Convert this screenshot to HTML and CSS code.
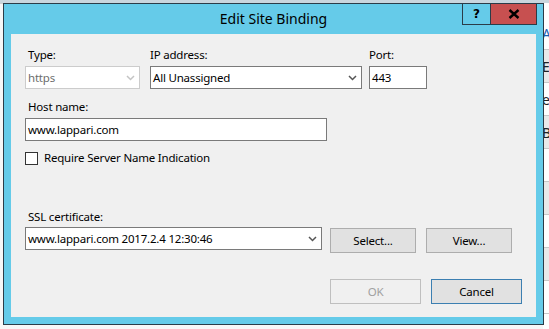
FILE: index.html
```html
<!DOCTYPE html>
<html>
<head>
<meta charset="utf-8">
<link rel="stylesheet" href="styles.css">
</head>
<body>
<div class="desktop">
  <div class="topbar"></div>
  <div class="workarea">
    <div class="leftpane"></div>
    <div class="listpane">
      <div class="lrow"><span class="blue">A</span></div>
      <div class="lrow alt"><span>E</span></div>
      <div class="lrow"><span>e</span></div>
      <div class="lrow alt"><span>Br</span></div>
      <div class="lrow"><span></span></div>
      <div class="lrow alt"><span></span></div>
      <div class="lrow"><span></span></div>
      <div class="lrow alt"><span></span></div>
      <div class="lrow"><span></span></div>
    </div>
  </div>
</div>

<div class="dialog">
  <div class="titlebar">
    <div class="tspacer"></div>
    <div class="title">Edit Site Binding</div>
    <div class="controls">
      <div class="cbtn help">?</div>
      <div class="cbtn close">
        <svg width="12" height="10" viewBox="0 0 12 10"><path d="M1.5 1 L10.5 9 M10.5 1 L1.5 9" stroke="#000" stroke-width="2.4" fill="none"/></svg>
      </div>
    </div>
  </div>
  <div class="client">
    <div class="row1">
      <div class="field f-type">
        <div class="label indent">Type:</div>
        <div class="select disabled"><span>https</span>
          <svg width="9" height="6" viewBox="0 0 9 6"><path d="M1 1 L4.5 4.5 L8 1" stroke="#c4c4c4" stroke-width="1.5" fill="none"/></svg>
        </div>
      </div>
      <div class="field f-ip">
        <div class="label">IP address:</div>
        <div class="select"><span>All Unassigned</span>
          <svg width="9" height="6" viewBox="0 0 9 6"><path d="M1 1 L4.5 4.5 L8 1" stroke="#555" stroke-width="1.5" fill="none"/></svg>
        </div>
      </div>
      <div class="field f-port">
        <div class="label">Port:</div>
        <div class="input"><span>443</span></div>
      </div>
    </div>

    <div class="label indent hostlabel">Host name:</div>
    <div class="input host"><span>www.lappari.com</span></div>

    <div class="checkrow">
      <div class="checkbox"></div>
      <span class="label">Require Server Name Indication</span>
    </div>

    <div class="label indent ssllabel">SSL certificate:</div>
    <div class="sslrow">
      <div class="select ssl"><span>www.lappari.com 2017.2.4 12:30:46</span>
        <svg width="9" height="6" viewBox="0 0 9 6"><path d="M1 1 L4.5 4.5 L8 1" stroke="#555" stroke-width="1.5" fill="none"/></svg>
      </div>
      <div class="btn sel">Select...</div>
      <div class="btn view">View...</div>
    </div>

    <div class="footer">
      <div class="btn ok disabledbtn">OK</div>
      <div class="btn cancel">Cancel</div>
    </div>
  </div>
</div>
</body>
</html>
```

FILE: styles.css
```css
* { box-sizing: border-box; }
html, body {
  margin: 0;
  padding: 0;
}
body {
  width: 549px;
  height: 329px;
  overflow: hidden;
  position: relative;
  background: #f0f0f0;
  font-family: "Noto Sans", "Open Sans", sans-serif;
}

.desktop {
  width: 549px;
  height: 329px;
  display: flex;
  flex-direction: column;
}
.topbar {
  height: 3px;
  background: #c9d6de;
}
.workarea {
  flex: 1;
  display: flex;
}
.leftpane {
  flex: 1;
  background: #f7f7f7;
  border-top: 1px solid #d0d0d0;
}
.listpane {
  width: 6px;
  display: flex;
  flex-direction: column;
  background: #fff;
  padding-top: 14px;
}
.lrow {
  height: 33px;
  flex: none;
  border-bottom: 1px solid #c8c8c8;
  font-size: 14px;
  line-height: 33px;
  color: #222;
  overflow: hidden;
  white-space: nowrap;
}
.lrow.alt { background: #e9e9e9; }
.lrow span { display: block; margin-left: -1px; }
.lrow .blue { color: #1a5fb4; }

.dialog {
  position: absolute;
  left: 3px;
  top: 3px;
  width: 541px;
  height: 322px;
  border: 1px solid #2b3c48;
  background: #65cbe9;
  display: flex;
  flex-direction: column;
}

.titlebar {
  height: 30px;
  display: grid;
  grid-template-columns: 1fr auto 1fr;
  align-items: start;
}
.title {
  font-size: 14px;
  line-height: 20px;
  margin-top: 5px;
  color: #000;
  white-space: nowrap;
}
.controls {
  justify-self: end;
  display: flex;
  margin-top: -1px;
  margin-right: 6px;
}
.cbtn {
  height: 22px;
  display: flex;
  align-items: center;
  justify-content: center;
  border: 1px solid #2b3c48;
}
.help {
  width: 29px;
  background: #65cbe9;
  font-family: "DejaVu Sans", sans-serif;
  font-weight: bold;
  font-size: 12px;
  color: #000;
}
.close {
  width: 47px;
  margin-left: -1px;
  background: #c75050;
}

.client {
  flex: 1;
  margin: 0 7px 7px 7px;
  background: #f0f0f0;
  padding: 13px 0 0 14px;
  position: relative;
  display: flex;
  flex-direction: column;
  align-items: flex-start;
  font-size: 11.5px;
  letter-spacing: -0.2px;
}

.label {
  font-size: 11.5px;
  line-height: 16px;
  color: #000;
  white-space: nowrap;
}
.indent { padding-left: 3px; }

.row1 {
  display: flex;
}
.field {
  display: flex;
  flex-direction: column;
}
.field .label { margin-bottom: 3px; }
.f-type { width: 115px; }
.f-ip { width: 212px; margin-left: 10px; }
.f-port { width: 58px; margin-left: 7px; }

.select, .input {
  height: 23px;
  background: #fff;
  border: 1px solid #7a7a7a;
  display: flex;
  align-items: center;
  justify-content: space-between;
  padding: 0 4px 0 2px;
  font-size: 11.5px;
  color: #000;
  white-space: nowrap;
}
.select.disabled {
  border-color: #cccccc;
  color: #6d6d6d;
}
.select svg { flex: none; }

.hostlabel { margin-top: 10px; }
.input.host {
  margin-top: 3px;
  width: 302px;
}

.checkrow {
  display: flex;
  align-items: center;
  margin-top: 9px;
}
.checkbox {
  width: 13px;
  height: 13px;
  background: #fff;
  border: 1px solid #333;
  margin-right: 6px;
}

.ssllabel { margin-top: 43px; }
.sslrow {
  display: flex;
  align-items: flex-start;
  margin-top: 2px;
}
.select.ssl { width: 297px; }

.btn {
  height: 25px;
  width: 86px;
  background: #e1e1e1;
  border: 1px solid #adadad;
  display: flex;
  align-items: center;
  justify-content: center;
  font-size: 11.5px;
  color: #000;
}
.btn.sel { margin-left: 8px; margin-top: 1px; }
.btn.view { margin-left: 10px; margin-top: 1px; }

.footer {
  display: flex;
  align-self: stretch;
  justify-content: flex-end;
  margin-top: 26px;
  padding-right: 14px;
}
.btn.ok, .btn.cancel { width: 91px; }
.btn.cancel { margin-left: 10px; border-color: #3c7fb1; }
.disabledbtn {
  background: #f0f0f0;
  border-color: #bfbfbf;
  color: #a0a0a0;
}
```
